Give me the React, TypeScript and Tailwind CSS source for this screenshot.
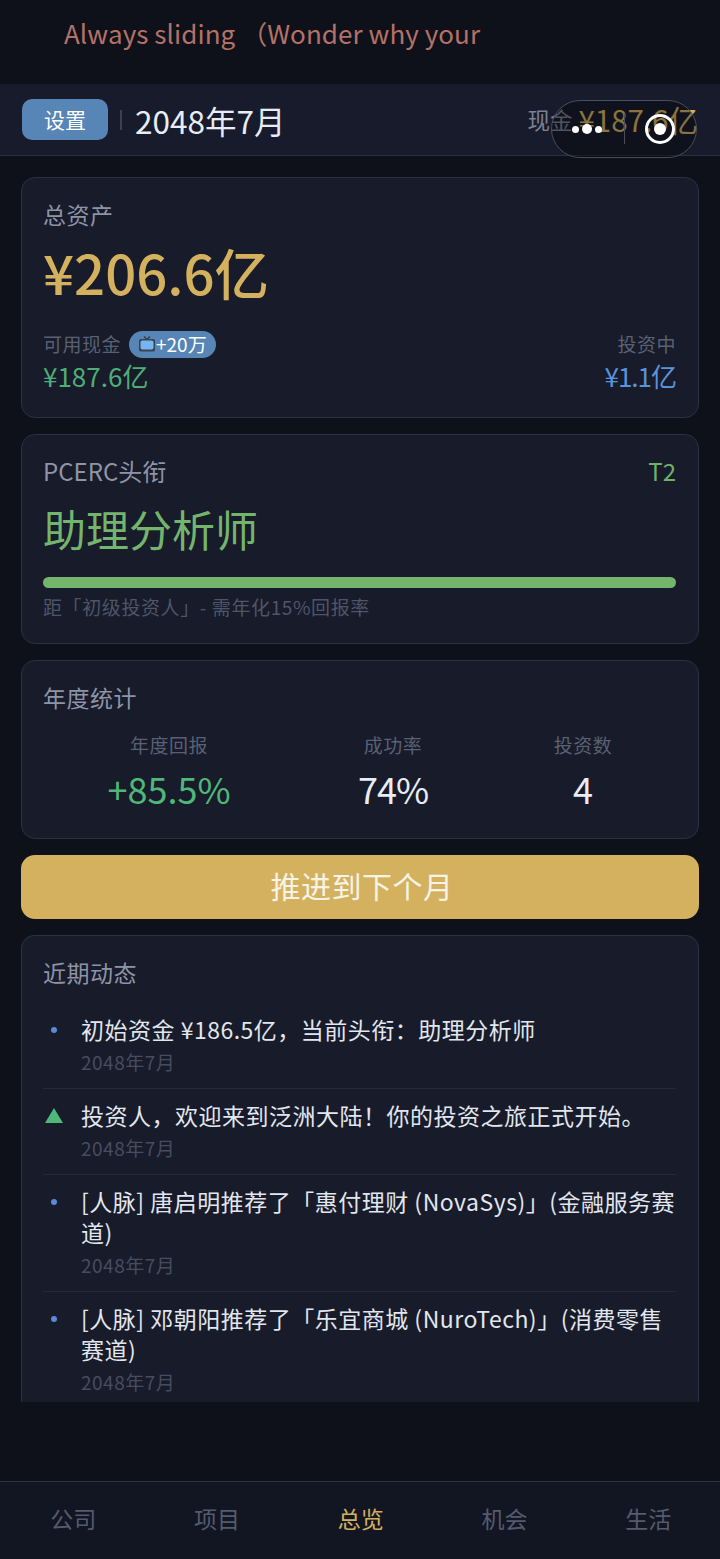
const font = { fontFamily: '"Noto Sans CJK SC", "Noto Sans", sans-serif' };

function Tv() {
  return (
    <svg viewBox="0 0 18 18" className="h-[18px] w-[18px] shrink-0">
      <path d="M6 1.5 L9 4.5 L12 1.5" fill="none" stroke="#2f3a48" strokeWidth="1.2" />
      <rect x="1" y="4" width="16" height="12.5" rx="2" fill="#3a4350" />
      <rect x="2.5" y="5.5" width="13" height="9" rx="2" fill="#74b6f0" />
    </svg>
  );
}

function Capsule() {
  return (
    <div className="absolute left-[551px] top-[100px] flex h-[58px] w-[146px] items-center rounded-full border border-[#4a4e58] bg-black/35">
      <div className="flex w-[72px] items-center justify-center gap-[3px] pr-[2px]">
        <span className="h-[7px] w-[7px] rounded-full bg-white" />
        <span className="h-[10px] w-[10px] rounded-full bg-white" />
        <span className="h-[7px] w-[7px] rounded-full bg-white" />
      </div>
      <div className="h-[30px] w-px bg-[#4a4e58]" />
      <div className="flex flex-1 items-center justify-center pr-[2px]">
        <div className="flex h-[30px] w-[30px] items-center justify-center rounded-full border-[3px] border-white">
          <span className="h-[12px] w-[12px] rounded-full bg-white" />
        </div>
      </div>
    </div>
  );
}

function Card({ className, children }: { className: string; children: React.ReactNode }) {
  return (
    <div className={`rounded-[14px] border border-[#2b3144] bg-[#171b2a] pl-[21px] pr-[22px] ${className}`}>
      {children}
    </div>
  );
}

function Feed({ mark, text, last }: { mark: "dot" | "up"; text: React.ReactNode; last?: boolean }) {
  return (
    <div className={`flex ${last ? "" : "border-b border-[#23283a]"} pt-[11px] pb-[13px]`}>
      <div className="flex h-[31px] w-[38px] shrink-0 items-center justify-start">
        {mark === "dot" ? (
          <span className="ml-[8px] h-[6px] w-[6px] rounded-full bg-[#5b8bd6]" />
        ) : (
          <span className="ml-[2px] h-0 w-0 border-x-[9px] border-b-[15px] border-x-transparent border-b-[#4fb878]" />
        )}
      </div>
      <div>
        <div className="text-[23px] leading-[31px] tracking-[0.5px] text-[#e2e6ee]">{text}</div>
        <div className="mt-[4px] text-[19px] leading-[26px] tracking-[0.5px] text-[#474d60]">2048年7月</div>
      </div>
    </div>
  );
}

export default function App() {
  return (
    <div style={font} className="relative flex h-[1559px] w-[720px] flex-col overflow-hidden bg-[#0e1119]">
      {/* song banner */}
      <div className="flex h-[84px] shrink-0 items-start pl-[64px] pt-[14px]">
        <div className="w-[423px] overflow-hidden whitespace-nowrap text-[26px] leading-[38px] tracking-[0.06px] text-[#b57168]">
          Always sliding （Wonder why your heart
        </div>
      </div>

      {/* top bar */}
      <div className="flex h-[72px] shrink-0 items-center border-b border-[#2b3040] bg-[#171b2b] pl-[22px] pr-[22px]">
        <div className="flex h-[41px] w-[86px] items-center justify-center rounded-[10px] bg-[#5785b5] text-[21px] text-white">
          设置
        </div>
        <div className="ml-[12px] h-[20px] w-[2px] bg-[#3b4152]" />
        <div className="ml-[13px] text-[31.5px] leading-[40px] text-[#e8ecf4]">2048年7月</div>
        <div className="ml-auto flex items-center gap-[6px] pb-[2px]">
          <span className="text-[22.5px] leading-[40px] text-[#7c8294]">现金</span>
          <span className="text-[29.5px] leading-[40px] text-[#d4b15e]">¥187.6亿</span>
        </div>
      </div>

      {/* content */}
      <div className="flex min-h-0 flex-col gap-[16px] px-[21px] pt-[21px]">
        <Card className="h-[241px] pt-[20px]">
          <div className="text-[23px] leading-[32px] tracking-[0.5px] text-[#8e94a6]">总资产</div>
          <div className="mt-[7px] text-[54.5px] font-medium leading-[70px] text-[#d4b15e]">¥206.6亿</div>
          <div className="mt-[23px] flex justify-between">
            <div>
              <div className="flex items-center gap-[8px]">
                <span className="text-[19px] leading-[28px] tracking-[0.5px] text-[#5a6073]">可用现金</span>
                <span className="flex h-[27px] items-center rounded-full bg-[#5785b5] pl-[9px] pr-[9px] text-[19px] text-white">
                  <Tv />
                  +20万
                </span>
              </div>
              <div className="text-[26px] leading-[36px] text-[#4fae78]">¥187.6亿</div>
            </div>
            <div className="text-right">
              <div className="text-[19px] leading-[28px] tracking-[0.5px] text-[#5a6073]">投资中</div>
              <div className="text-[26px] leading-[36px] tracking-[-1px] text-[#5b93dc]">¥1.1亿</div>
            </div>
          </div>
        </Card>

        <Card className="h-[210px] pt-[19px]">
          <div className="flex justify-between text-[24px] leading-[34px]">
            <span className="text-[#8e94a6]">PCERC头衔</span>
            <span className="text-[#6fb06a]">T2</span>
          </div>
          <div className="mt-[10px] text-[43px] leading-[60px] text-[#74b56e]">助理分析师</div>
          <div className="mt-[19px] h-[11px] rounded-full bg-[#74b56e]" />
          <div className="mt-[5px] text-[19px] leading-[28px] tracking-[0.6px] text-[#4f5568]">距「初级投资人」- 需年化15%回报率</div>
        </Card>

        <Card className="h-[179px] pt-[19px]">
          <div className="text-[23px] leading-[34px] tracking-[0.5px] text-[#8e94a6]">年度统计</div>
          <div className="mt-[17px] flex text-center">
            <div className="w-[252px]">
              <div className="text-[19px] leading-[28px] tracking-[0.5px] text-[#5a6073]">年度回报</div>
              <div className="mt-[5px] text-[36px] leading-[48px] text-[#4fb878]">+85.5%</div>
            </div>
            <div className="w-[196px]">
              <div className="text-[19px] leading-[28px] tracking-[0.5px] text-[#5a6073]">成功率</div>
              <div className="mt-[5px] text-[36px] leading-[48px] tracking-[-1px] text-[#e8ecf4]">74%</div>
            </div>
            <div className="w-[184px]">
              <div className="text-[19px] leading-[28px] tracking-[0.5px] text-[#5a6073]">投资数</div>
              <div className="mt-[5px] text-[36px] leading-[48px] text-[#e8ecf4]">4</div>
            </div>
          </div>
        </Card>

        <div className="flex h-[64px] shrink-0 items-center justify-center rounded-[14px] bg-[#d4b15e] pb-[3px] pl-[4px] text-[30px] tracking-[0.5px] text-[#f7f3e6]">
          推进到下个月
        </div>

        <div className="h-[467px] overflow-hidden rounded-t-[14px] border-x border-t border-[#2b3144] bg-[#171b2a] pl-[21px] pr-[22px] pt-[19px]">
          <div className="text-[23px] leading-[34px] tracking-[0.5px] text-[#8e94a6]">近期动态</div>
          <div className="mt-[14px]">
            <Feed mark="dot" text="初始资金 ¥186.5亿，当前头衔：助理分析师" />
            <Feed mark="up" text="投资人，欢迎来到泛洲大陆！你的投资之旅正式开始。" />
            <Feed mark="dot" text="[人脉] 唐启明推荐了「惠付理财 (NovaSys)」(金融服务赛道)" />
            <Feed mark="dot" text="[人脉] 邓朝阳推荐了「乐宜商城 (NuroTech)」(消费零售赛道)" last />
          </div>
        </div>
      </div>

      {/* bottom tabs */}
      <div className="absolute bottom-0 left-0 flex h-[78px] w-full items-center border-t border-[#2b3040] bg-[#121622] pb-[4px] pl-[1.5px] text-[23px]">
        {["公司", "项目", "总览", "机会", "生活"].map((t) => (
          <div key={t} className={`flex-1 text-center ${t === "总览" ? "text-[#d4b15e]" : "text-[#555b6e]"}`}>
            {t}
          </div>
        ))}
      </div>

      <Capsule />
    </div>
  );
}
